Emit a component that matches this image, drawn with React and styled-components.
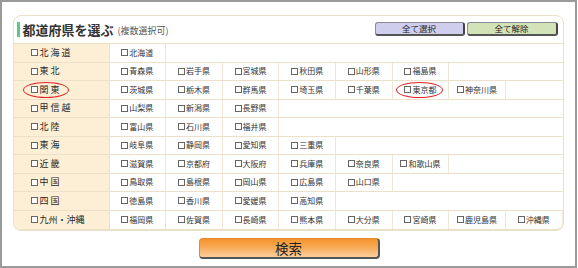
import React from "react";
import styled, { css, createGlobalStyle } from "styled-components";

const lineColor = "#ece0c8";
const cellLine = "#efe6d6";
const labelBg = "#fdefd5";

const GlobalCSS = createGlobalStyle`
  html, body {
    margin: 0;
    background: #fff;
    font-family: "Noto Sans CJK JP", "Noto Sans", sans-serif;
    color: #333;
  }
`;

const Frame = styled.div`
  box-sizing: border-box;
  width: 577px;
  height: 268px;
  border: 2px solid #9a9a9a;
  display: flex;
  flex-flow: column;
  align-items: center;
  padding-top: 13px;
`;

const Panel = styled.div`
  box-sizing: border-box;
  width: 551px;
  height: 215px;
  margin-left: -1px;
  border: 1px solid ${lineColor};
  border-radius: 8px;
  overflow: hidden;
  box-shadow: 0 1px 0 #eadfca;
  display: flex;
  flex-flow: column;
`;

const Header = styled.div`
  box-sizing: border-box;
  height: 28px;
  flex: none;
  display: flex;
  align-items: center;
  padding: 0 5px 0 3px;
  border-bottom: 1px solid ${lineColor};
`;

const Bar = styled.div`
  width: 3px;
  height: 15px;
  background: #5cc890;
  margin-right: 3px;
`;

const Title = styled.div`
  font-size: 13px;
  font-weight: 700;
  line-height: 15px;
  color: #333;
`;

const Sub = styled.div`
  font-size: 9px;
  line-height: 12px;
  color: #555;
  margin-left: 4px;
  margin-top: 3px;
`;

const Buttons = styled.div`
  margin-left: auto;
  display: flex;
  gap: 2px;
  margin-top: -2px;
`;

const SmallButton = styled.div`
  box-sizing: border-box;
  width: ${(p) => p.w || 90}px;
  height: 14px;
  border-radius: 3px;
  border: 1px solid #8a8a9a;
  border-right: 2px solid #444;
  border-bottom: 2px solid #555;
  background: ${(p) => p.bg};
  font-size: 8.5px;
  line-height: 11px;
  text-align: center;
  color: #222;
`;

const Row = styled.div`
  display: grid;
  grid-template-columns: 96px repeat(8, 1fr);
  height: 18.5px;
  flex: none;
  border-bottom: 1px solid ${lineColor};
  box-sizing: border-box;
  &:last-child {
    border-bottom: none;
    flex: 1;
  }
`;

const RegionCell = styled.div`
  background: ${labelBg};
  display: flex;
  align-items: center;
  padding-left: 17px;
  border-right: 1px solid ${lineColor};
`;

const PrefCell = styled.div`
  display: flex;
  align-items: center;
  justify-content: center;
  border-right: 1px solid ${cellLine};
`;

const Check = styled.span`
  position: relative;
  display: inline-flex;
  align-items: center;
  font-size: ${(p) => (p.region ? "9px" : "8px")};
  line-height: 10px;
  color: ${(p) => (p.region ? "#2a2a2a" : "#333")};
  white-space: nowrap;
  ${(p) =>
    p.spaced &&
    css`
      letter-spacing: 2px;
    `}
  ${(p) =>
    p.circled &&
    css`
      &::after {
        content: "";
        position: absolute;
        left: -8px;
        right: -7px;
        top: -3px;
        bottom: -3px;
        border: 1px solid #e02424;
        border-radius: 50%;
      }
    `}
`;

const Box = styled.span`
  box-sizing: border-box;
  display: inline-block;
  width: 7px;
  height: 7px;
  border: 1px solid #666;
  background: #fff;
  margin-right: ${(p) => (p.region ? 2 : 1)}px;
  flex: none;
`;

const SearchButton = styled.div`
  box-sizing: border-box;
  margin-top: 8px;
  margin-left: 1px;
  width: 181px;
  height: 21px;
  border-radius: 4px;
  border: 1px solid #e08a30;
  border-right: 2px solid #555;
  border-bottom: 2px solid #555;
  background: linear-gradient(to bottom, #f6942c 0%, #f8a955 45%, #fbcf9e 100%);
  font-size: 13.5px;
  line-height: 18px;
  text-align: center;
  color: #222;
`;

const regions = [
  { name: "北海道", prefs: ["北海道"] },
  { name: "東北", prefs: ["青森県", "岩手県", "宮城県", "秋田県", "山形県", "福島県"] },
  {
    name: "関東",
    circled: true,
    prefs: ["茨城県", "栃木県", "群馬県", "埼玉県", "千葉県", "東京都", "神奈川県"],
  },
  { name: "甲信越", prefs: ["山梨県", "新潟県", "長野県"] },
  { name: "北陸", prefs: ["富山県", "石川県", "福井県"] },
  { name: "東海", prefs: ["岐阜県", "静岡県", "愛知県", "三重県"] },
  { name: "近畿", prefs: ["滋賀県", "京都府", "大阪府", "兵庫県", "奈良県", "和歌山県"] },
  { name: "中国", prefs: ["鳥取県", "島根県", "岡山県", "広島県", "山口県"] },
  { name: "四国", prefs: ["徳島県", "香川県", "愛媛県", "高知県"] },
  {
    name: "九州・沖縄",
    prefs: ["福岡県", "佐賀県", "長崎県", "熊本県", "大分県", "宮崎県", "鹿児島県", "沖縄県"],
  },
];

const circledPrefs = ["東京都"];

export default function App() {
  return (
    <>
      <GlobalCSS />
      <Frame>
        <Panel>
          <Header>
            <Bar />
            <Title>都道府県を選ぶ</Title>
            <Sub>(複数選択可)</Sub>
            <Buttons>
              <SmallButton bg="#cfcfed" w={90}>全て選択</SmallButton>
              <SmallButton bg="#d3e3b8" w={91}>全て解除</SmallButton>
            </Buttons>
          </Header>
          {regions.map((r) => (
            <Row key={r.name}>
              <RegionCell>
                <Check region spaced={r.name.length <= 3} circled={r.circled}>
                  <Box region />
                  {r.name}
                </Check>
              </RegionCell>
              {r.prefs.map((p) => (
                <PrefCell key={p}>
                  <Check circled={circledPrefs.includes(p)}>
                    <Box />
                    {p}
                  </Check>
                </PrefCell>
              ))}
            </Row>
          ))}
        </Panel>
        <SearchButton>検索</SearchButton>
      </Frame>
    </>
  );
}
